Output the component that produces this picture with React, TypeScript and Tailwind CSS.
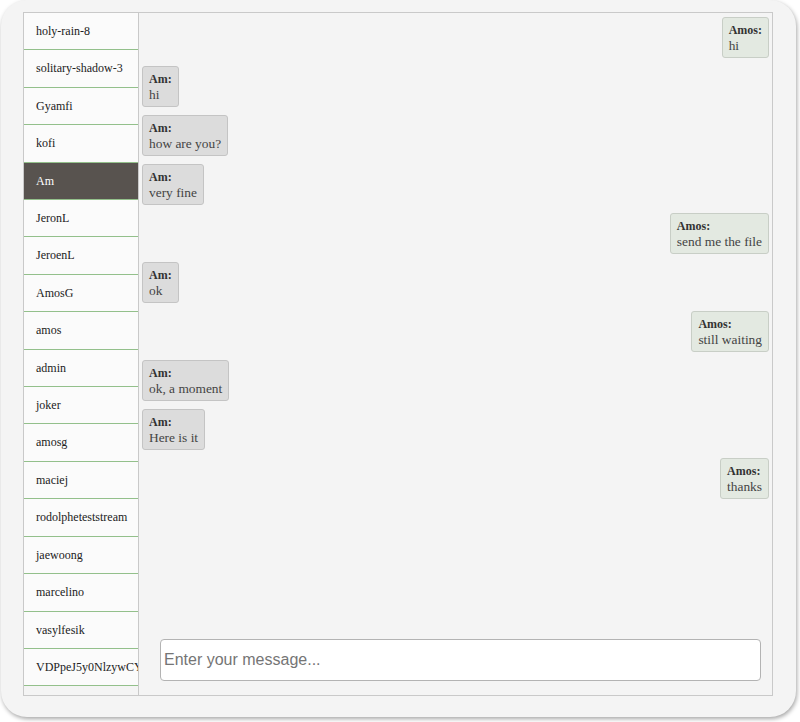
import React from 'react';

const users = [
  'holy-rain-8',
  'solitary-shadow-3',
  'Gyamfi',
  'kofi',
  'Am',
  'JeronL',
  'JeroenL',
  'AmosG',
  'amos',
  'admin',
  'joker',
  'amosg',
  'maciej',
  'rodolpheteststream',
  'jaewoong',
  'marcelino',
  'vasylfesik',
  'VDPpeJ5y0NlzywCY8bQa',
];

const messages: { from: string; text: string; mine: boolean }[] = [
  { from: 'Amos', text: 'hi', mine: true },
  { from: 'Am', text: 'hi', mine: false },
  { from: 'Am', text: 'how are you?', mine: false },
  { from: 'Am', text: 'very fine', mine: false },
  { from: 'Amos', text: 'send me the file', mine: true },
  { from: 'Am', text: 'ok', mine: false },
  { from: 'Amos', text: 'still waiting', mine: true },
  { from: 'Am', text: 'ok, a moment', mine: false },
  { from: 'Am', text: 'Here is it', mine: false },
  { from: 'Amos', text: 'thanks', mine: true },
];

export default function App() {
  const active = 'Am';

  return (
    <div className="w-[800px] h-[722px] bg-white pl-[1px]">
      <div className="w-[795px] h-[717px] rounded-[26px] bg-[#f4f4f4] shadow-[1px_2px_4px_rgba(0,0,0,0.35)] pl-[22px] pt-[12px]">
        <div className="w-[750px] h-[684px] border border-[#c9c9c9] flex font-['Liberation_Serif',serif]">
          {/* ── Sidebar: user list ── */}
          <div className="w-[115px] shrink-0 border-r border-[#c9c9c9] overflow-hidden">
            {users.map((u) => (
              <div
                key={u}
                className={`px-[12px] py-[11px] text-[12px] leading-[14.4px] whitespace-nowrap overflow-hidden border-b border-[#93c08b] ${
                  u === active ? 'bg-[#58534f] text-white' : 'bg-[#fbfbfb] text-[#222]'
                }`}
              >
                {u}
              </div>
            ))}
          </div>

          {/* ── Chat panel ── */}
          <div className="flex-1 flex flex-col min-w-0">
            <div className="flex-1 flex flex-col gap-[8px] pt-[4px] px-[3px]">
              {messages.map((m, i) => (
                <div key={i} className={`flex ${m.mine ? 'justify-end' : 'justify-start'}`}>
                  <div
                    className={`rounded-[3px] border px-[6px] pt-[5px] pb-[4px] text-[#333] ${
                      m.mine ? 'bg-[#e3e9e1] border-[#c8cec6]' : 'bg-[#dcdcdc] border-[#c4c4c4]'
                    }`}
                  >
                    <div className="text-[12px] leading-[15px] font-bold text-[#333]">{m.from}:</div>
                    <div className="text-[13.4px] leading-[15px] text-[#444]">{m.text}</div>
                  </div>
                </div>
              ))}
            </div>
            <div className="pl-[21px] pb-[14px]">
              <input
                type="text"
                placeholder="Enter your message..."
                className="w-[601px] h-[42px] bg-white border border-[#b3b3b3] rounded-[4px] pl-[3px] text-[16px] font-['Liberation_Sans',Arial,sans-serif] placeholder:text-[#757575] outline-none"
              />
            </div>
          </div>
        </div>
      </div>
    </div>
  );
}
